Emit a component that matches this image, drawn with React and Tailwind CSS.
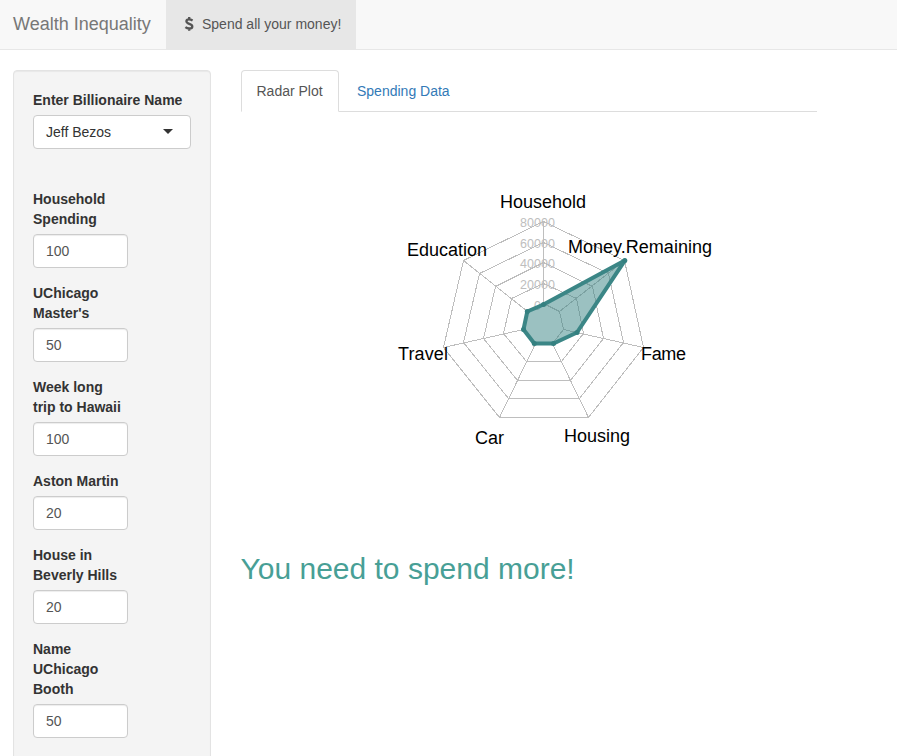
const fields = [
  { label: ["Household", "Spending"], value: "100" },
  { label: ["UChicago", "Master's"], value: "50" },
  { label: ["Week long", "trip to Hawaii"], value: "100" },
  { label: ["Aston Martin"], value: "20" },
  { label: ["House in", "Beverly Hills"], value: "20" },
  { label: ["Name", "UChicago", "Booth"], value: "50" },
];

const CX = 303.45;
const CY = 213.1;
const RX = 102.6;
const RY = 103.1;

function vertex(i, k) {
  const a = (i * 2 * Math.PI) / 7;
  return [Math.round(CX + RX * k * Math.sin(a)) - 0.5, Math.round(CY - RY * k * Math.cos(a)) - 0.5];
}

const axes = [0, 1, 2, 3, 4, 5, 6];
const rings = [0.2, 0.4, 0.6, 0.8, 1];
const dataPoints = [
  [302.5, 192.5],
  [383.8, 148.6],
  [336, 220.5],
  [312.5, 231.5],
  [293.3, 231.5],
  [282.5, 217.5],
  [286.3, 199.5],
];

const names = [
  { text: "Household", x: 259, y: 96, w: 86 },
  { text: "Money.Remaining", x: 327, y: 141, w: 144 },
  { text: "Fame", x: 400, y: 248, w: 45 },
  { text: "Housing", x: 323, y: 330, w: 66 },
  { text: "Car", x: 234, y: 332, w: 29 },
  { text: "Travel", x: 157, y: 248, w: 50 },
  { text: "Education", x: 166, y: 144, w: 80 },
];

const ticks = [
  { text: "80000", x: 279, y: 115, w: 35 },
  { text: "60000", x: 279, y: 136, w: 35 },
  { text: "40000", x: 279, y: 156, w: 35 },
  { text: "20000", x: 279, y: 177, w: 35 },
  { text: "0", x: 293, y: 198, w: 7 },
];

function RadarPlot() {
  const polygon = dataPoints.map((p) => p.join(",")).join(" ");
  return (
    <svg width="576" height="400" viewBox="0 0 576 400" className="block">
      <g stroke="#bebebe" strokeWidth="1" fill="none" shapeRendering="crispEdges">
        {rings.map((k) => (
          <polygon key={k} points={axes.map((i) => vertex(i, k).join(",")).join(" ")} />
        ))}
        {axes.map((i) => {
          const [x1, y1] = vertex(i, 0.2);
          const [x2, y2] = vertex(i, 1);
          return <line key={i} x1={x1} y1={y1} x2={x2} y2={y2} />;
        })}
      </g>
      <g fill="#bebebe" fontSize="12.5">
        {ticks.map((t) => (
          <text key={t.text} x={t.x} y={t.y} textLength={t.w}>{t.text}</text>
        ))}
      </g>
      <polygon points={polygon} fill="#378383" fillOpacity="0.5" stroke="#3b8686" strokeWidth="4" strokeLinejoin="round" />
      {dataPoints.map(([x, y]) => (
        <circle key={x} cx={x} cy={y} r="2.5" fill="#348080" />
      ))}
      <g fill="#000" fontSize="18">
        {names.map((n) => (
          <text key={n.text} x={n.x} y={n.y} textLength={n.w}>{n.text}</text>
        ))}
      </g>
    </svg>
  );
}

export default function App() {
  return (
    <div className="h-[756px] w-[897px] overflow-hidden bg-white font-['Liberation_Sans',Arial,sans-serif] text-[14px] leading-5 text-[#333]">
      <nav className="flex h-[50px] border-b border-[#e7e7e7] bg-[#f8f8f8]">
        <div className="w-[166px] pt-[14px] pl-[13px] text-[18px] text-[#777]">Wealth Inequality</div>
        <div className="flex h-[50px] w-[190px] items-start bg-[#e7e7e7] pt-[14px] pl-[18px] text-[#555]">
          <svg width="10" height="16" viewBox="0 0 10 16" className="mt-[2px] mr-2 block" fill="none" stroke="#555" strokeWidth="2.3">
            <path d="M5.2 1v2.4M5.2 12.4v2.4M8.6 4.5C7.4 3.8 6.2 3.4 5 3.4 3.4 3.4 2.4 4.1 2.4 5.3 2.4 8.3 8.3 7.3 8.3 10.4 8.3 11.8 7 12.5 5.2 12.5 3.8 12.5 2.5 12 1.4 11.1" />
          </svg>
          <span>Spend all your money!</span>
        </div>
      </nav>
      <main className="flex pt-5 pl-[13px]">
        <aside className="h-[760px] w-[198px] shrink-0 rounded border border-[#e3e3e3] bg-[#f4f4f4] p-[19px] shadow-[inset_0_1px_1px_rgba(0,0,0,0.05)]">
          <div className="font-bold">Enter Billionaire Name</div>
          <div className="mt-[5px] mb-10 flex h-[34px] items-center justify-between rounded border border-[#ccc] bg-white pr-[17px] pl-3">
            <span>Jeff Bezos</span>
            <span className="mb-[2px] border-x-[5px] border-t-[5px] border-x-transparent border-t-[#333]" />
          </div>
          {fields.map((f) => (
            <div key={f.label.join(" ")} className="mb-[15px] w-[95px]">
              <div className="font-bold whitespace-nowrap">
                {f.label.map((line) => (
                  <div key={line}>{line}</div>
                ))}
              </div>
              <div className="mt-[5px] flex h-[34px] items-center rounded border border-[#ccc] bg-white px-3 text-[#555] shadow-[inset_0_1px_1px_rgba(0,0,0,0.075)]">
                {f.value}
              </div>
            </div>
          ))}
        </aside>
        <section className="ml-[30px] w-[576px]">
          <div className="flex h-[42px] border-b border-[#ddd]">
            <div className="-mb-px h-[42px] w-[98px] rounded-t border border-[#ddd] border-b-white bg-white pt-[10px] pl-[14.5px] text-[#555]">
              Radar Plot
            </div>
            <div className="pt-[11px] pl-[18px] text-[#337ab7]">Spending Data</div>
          </div>
          <RadarPlot />
          <h2 className="mt-10 -ml-[0.5px] text-[30px] leading-[33px] text-[#489f96]">You need to spend more!</h2>
        </section>
      </main>
    </div>
  );
}
